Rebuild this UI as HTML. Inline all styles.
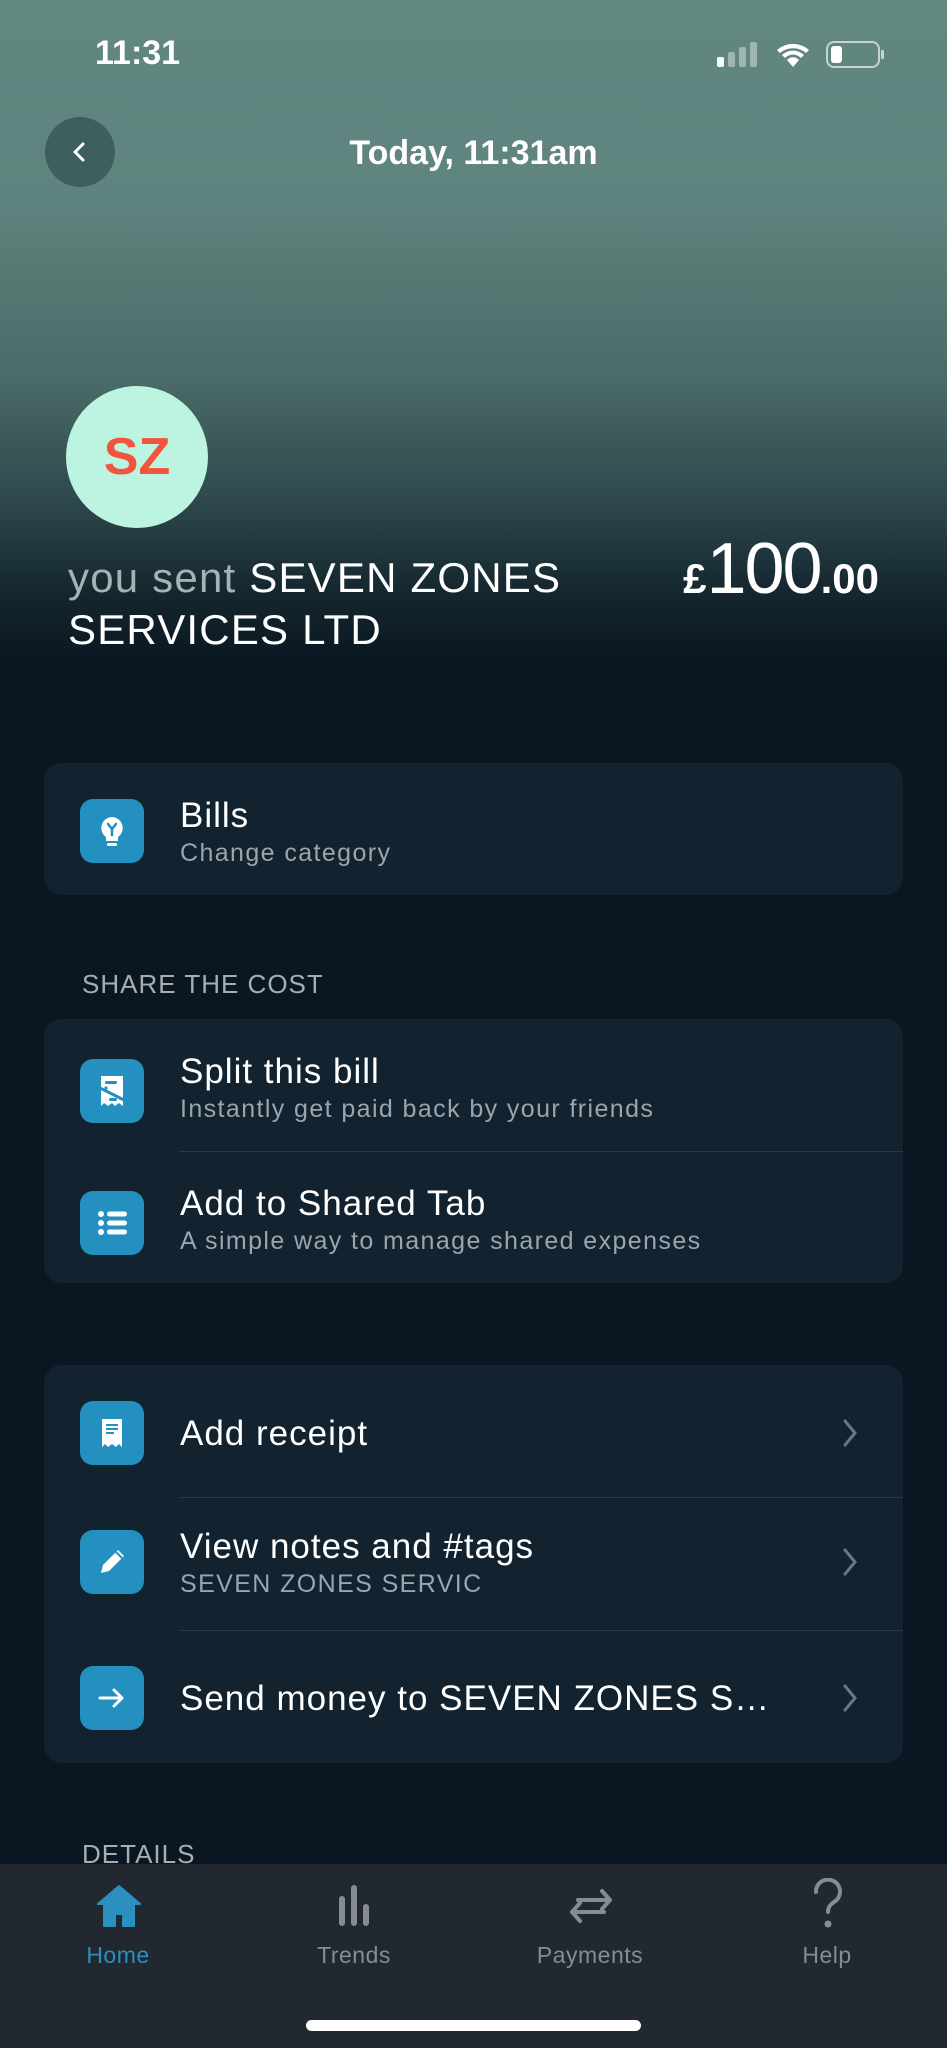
<!DOCTYPE html>
<html style="background:#0a1621;width:947px;height:2048px;overflow:hidden"><head><meta charset="utf-8"><style>
*{margin:0;padding:0;box-sizing:border-box}
body{width:947px;height:2048px;overflow:hidden;font-family:"Liberation Sans",sans-serif;color:#fff;
background:linear-gradient(180deg,#628781 0px,#5f837e 200px,#4a6b67 380px,#2c454a 510px,#15272f 590px,#0a1721 660px,#0a1621 2048px);position:relative}
.a{position:absolute}
.card{position:absolute;left:44px;width:859px;background:#12222f;border-radius:18px}
.ic{position:absolute;left:36px;width:64px;height:64px;border-radius:13px;background:#2390c0;display:flex;align-items:center;justify-content:center}
.t{position:absolute;left:136px;font-size:35px;color:#fff;white-space:nowrap;letter-spacing:1px}
.s{position:absolute;left:136px;font-size:25px;color:#9aa5ad;white-space:nowrap;letter-spacing:1.4px}
.div{position:absolute;left:135px;right:0;height:1px;background:#2a3945}
.chev{position:absolute;left:796px}
.hdr{position:absolute;left:82px;font-size:26px;color:#a6adb3;letter-spacing:1px}
.tab{position:absolute;top:1864px;left:0;width:947px;height:184px;background:#22282f}
.tl{position:absolute;top:78px;font-size:23px;color:#868c92;transform:translateX(-50%);letter-spacing:.5px}
</style></head><body>
<div class="a" style="left:95px;top:34px;font-size:34px;font-weight:bold">11:31</div>
<svg class="a" style="left:716px;top:40px" width="172" height="30" viewBox="0 0 172 30">
<rect x="1" y="17" width="7" height="10" rx="2" fill="#fff"/>
<rect x="12" y="12" width="7" height="15" rx="2" fill="#9fb5b1"/>
<rect x="23" y="7" width="7" height="20" rx="2" fill="#9fb5b1"/>
<rect x="34" y="2" width="7" height="25" rx="2" fill="#9fb5b1"/>
<path d="M61 10a24 24 0 0 1 32 0l-3 3a20 20 0 0 0-26 0z M66 15a16 16 0 0 1 22 0l-3 3a11 11 0 0 0-16 0z M71 20a8 8 0 0 1 12 0l-6 7z" fill="#fff"/>
<rect x="111" y="2" width="52" height="25" rx="7" fill="none" stroke="#c7d3d1" stroke-width="2"/>
<rect x="115" y="6" width="11" height="17" rx="3" fill="#fff"/>
<rect x="165" y="10" width="3" height="9" rx="1" fill="#c7d3d1"/>
</svg>
<div class="a" style="left:45px;top:117px;width:70px;height:70px;border-radius:50%;background:#3f5f5e"></div>
<svg class="a" style="left:68px;top:139px" width="24" height="26"><path d="M15 5l-8 8 8 8" stroke="#fff" stroke-width="3" fill="none" stroke-linecap="round" stroke-linejoin="round"/></svg>
<div class="a" style="left:0;width:947px;top:134px;text-align:center;font-size:34px;font-weight:bold">Today, 11:31am</div>
<div class="a" style="left:66px;top:386px;width:142px;height:142px;border-radius:50%;background:#bdf4e1;display:flex;align-items:center;justify-content:center;color:#f2543d;font-size:52px;font-weight:bold">SZ</div>
<div class="a" style="left:68px;top:552px;font-size:42px;line-height:52px;width:600px;letter-spacing:1.2px"><span style="color:#a7b2b4">you sent</span> SEVEN ZONES<br>SERVICES LTD</div>
<div class="a" style="right:68px;top:528px;white-space:nowrap;font-weight:bold"><span style="font-size:42px">£</span><span style="font-size:72px;letter-spacing:-2px;font-weight:normal">100</span><span style="font-size:42px">.00</span></div>

<div class="card" style="top:763px;height:132px">
<div class="ic" style="top:36px"><svg width="40" height="40" viewBox="0 0 40 40"><path d="M20 6a11 11 0 0 0-6 20v4h12v-4a11 11 0 0 0-6-20z" fill="#fff"/><rect x="15" y="32" width="10" height="3" rx="1.5" fill="#fff"/><path d="M16 13l4 5 4-5M20 18v6" stroke="#2390c0" stroke-width="2.5" fill="none" stroke-linecap="round"/></svg></div>
<div class="t" style="top:33px">Bills</div>
<div class="s" style="top:76px">Change category</div>
</div>
<div class="hdr" style="top:969px">SHARE THE COST</div>
<div class="card" style="top:1019px;height:264px">
<div class="ic" style="top:40px"><svg width="40" height="40" viewBox="0 0 40 40"><path d="M9 5h22v30l-4-3-4 3-3-3-4 3-4-3-3 3z" fill="#fff"/><path d="M8 17l24 12" stroke="#2390c0" stroke-width="3"/><rect x="13" y="10" width="12" height="3" rx="1.5" fill="#2390c0"/><circle cx="14" cy="17" r="1.6" fill="#2390c0"/><rect x="17" y="27" width="8" height="3" rx="1.5" fill="#2390c0"/></svg></div>
<div class="t" style="top:33px">Split this bill</div>
<div class="s" style="top:76px">Instantly get paid back by your friends</div>
<div class="div" style="top:132px"></div>
<div class="ic" style="top:172px"><svg width="40" height="40" viewBox="0 0 40 40"><circle cx="9" cy="11" r="3" fill="#fff"/><circle cx="9" cy="20" r="3" fill="#fff"/><circle cx="9" cy="29" r="3" fill="#fff"/><rect x="15" y="8.5" width="20" height="5" rx="2.5" fill="#fff"/><rect x="15" y="17.5" width="20" height="5" rx="2.5" fill="#fff"/><rect x="15" y="26.5" width="20" height="5" rx="2.5" fill="#fff"/></svg></div>
<div class="t" style="top:165px">Add to Shared Tab</div>
<div class="s" style="top:208px">A simple way to manage shared expenses</div>
</div>

<div class="card" style="top:1365px;height:398px">
<div class="ic" style="top:36px"><svg width="40" height="40" viewBox="0 0 40 40"><path d="M10 6h20v28l-3-3-3 3-4-3-4 3-3-3-3 3z" fill="#fff"/><rect x="14" y="11" width="12" height="2" fill="#2390c0"/><rect x="14" y="15" width="12" height="2" fill="#2390c0"/><rect x="14" y="19" width="8" height="2" fill="#2390c0"/></svg></div>
<div class="t" style="top:49px">Add receipt</div>
<svg class="chev" style="top:52px" width="20" height="32"><path d="M5 4l10 12-10 12" stroke="#6b7780" stroke-width="3" fill="none" stroke-linecap="round"/></svg>
<div class="div" style="top:132px"></div>
<div class="ic" style="top:165px"><svg width="40" height="40" viewBox="0 0 40 40"><path d="M9 31l2-8 15-15 6 6-15 15z" fill="#fff"/><path d="M24 10l6 6" stroke="#2390c0" stroke-width="2"/></svg></div>
<div class="t" style="top:162px">View notes and #tags</div>
<div class="s" style="top:205px">SEVEN ZONES SERVIC</div>
<svg class="chev" style="top:181px" width="20" height="32"><path d="M5 4l10 12-10 12" stroke="#6b7780" stroke-width="3" fill="none" stroke-linecap="round"/></svg>
<div class="div" style="top:265px"></div>
<div class="ic" style="top:301px"><svg width="40" height="40" viewBox="0 0 40 40"><path d="M8 20h22M22 12l8 8-8 8" stroke="#fff" stroke-width="3" fill="none" stroke-linecap="round" stroke-linejoin="round"/></svg></div>
<div class="t" style="top:314px">Send money to SEVEN ZONES S…</div>
<svg class="chev" style="top:317px" width="20" height="32"><path d="M5 4l10 12-10 12" stroke="#6b7780" stroke-width="3" fill="none" stroke-linecap="round"/></svg>
</div>
<div class="hdr" style="top:1839px">DETAILS</div>

<div class="tab">
<svg class="a" style="left:95px;top:20px" width="48" height="44" viewBox="0 0 48 44"><path d="M24 2L3 20h6v22h11V30h8v12h11V20h6z" fill="#2b8fc0" stroke="#2b8fc0" stroke-width="2" stroke-linejoin="round"/></svg>
<svg class="a" style="left:334px;top:18px" width="40" height="46"><rect x="5" y="14" width="6" height="30" rx="3" fill="#868c92"/><rect x="17" y="3" width="6" height="41" rx="3" fill="#868c92"/><rect x="29" y="22" width="6" height="22" rx="3" fill="#868c92"/></svg>
<svg class="a" style="left:564px;top:18px" width="54" height="46"><path d="M14 18h32M38 9l8 9-8 9M40 30H8M16 21l-8 9 8 9" stroke="#868c92" stroke-width="4" fill="none" stroke-linecap="round" stroke-linejoin="round"/></svg>
<svg class="a" style="left:808px;top:14px" width="40" height="52"><path d="M8 14a12 12 0 1 1 18 10c-4 3-6 5-6 10" stroke="#868c92" stroke-width="4" fill="none" stroke-linecap="round"/><circle cx="20" cy="46" r="3.5" fill="#868c92"/></svg>
<div class="tl" style="left:118px;color:#2b8fc0">Home</div>
<div class="tl" style="left:354px">Trends</div>
<div class="tl" style="left:590px">Payments</div>
<div class="tl" style="left:827px">Help</div>
<div class="a" style="left:306px;top:156px;width:335px;height:11px;border-radius:6px;background:#fff"></div>
</div>
</body></html>
